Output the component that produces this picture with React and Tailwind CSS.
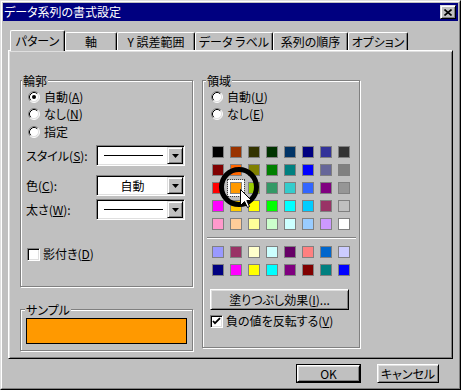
import React from "react";

const raised =
  "border border-t-white border-l-white border-r-black border-b-black shadow-[inset_1px_1px_0_#dfdfdf,inset_-1px_-1px_0_#808080]";
const raisedInner =
  "border border-t-[#dfdfdf] border-l-[#dfdfdf] border-r-black border-b-black shadow-[inset_1px_1px_0_#ffffff,inset_-1px_-1px_0_#808080]";
const sunken =
  "border border-t-[#808080] border-l-[#808080] border-r-white border-b-white shadow-[inset_1px_1px_0_#000000,inset_-1px_-1px_0_#dfdfdf]";
const etched = "border border-[#808080] shadow-[inset_1px_1px_0_#ffffff,1px_1px_0_#ffffff]";

const rows1 = [
  ["bg-[#000000]", "bg-[#993300]", "bg-[#333300]", "bg-[#003300]", "bg-[#003366]", "bg-[#000080]", "bg-[#333399]", "bg-[#333333]"],
  ["bg-[#800000]", "bg-[#ff6600]", "bg-[#808000]", "bg-[#008000]", "bg-[#008080]", "bg-[#0000ff]", "bg-[#666699]", "bg-[#808080]"],
  ["bg-[#ff0000]", "bg-[#ff9900]", "bg-[#99cc00]", "bg-[#339966]", "bg-[#33cccc]", "bg-[#3366ff]", "bg-[#800080]", "bg-[#969696]"],
  ["bg-[#ff00ff]", "bg-[#ffcc00]", "bg-[#ffff00]", "bg-[#00ff00]", "bg-[#00ffff]", "bg-[#00ccff]", "bg-[#993366]", "bg-[#c0c0c0]"],
  ["bg-[#ff99cc]", "bg-[#ffcc99]", "bg-[#ffff99]", "bg-[#ccffcc]", "bg-[#ccffff]", "bg-[#99ccff]", "bg-[#cc99ff]", "bg-[#ffffff]"],
];
const rows2 = [
  ["bg-[#9999ff]", "bg-[#993366]", "bg-[#ffffcc]", "bg-[#ccffff]", "bg-[#660066]", "bg-[#ff8080]", "bg-[#0066cc]", "bg-[#ccccff]"],
  ["bg-[#000080]", "bg-[#ff00ff]", "bg-[#ffff00]", "bg-[#00ffff]", "bg-[#800080]", "bg-[#800000]", "bg-[#008080]", "bg-[#0000ff]"],
];

function Radio({ checked }) {
  return (
    <svg width="12" height="12" viewBox="0 0 12 12" className="shrink-0">
      <circle cx="6" cy="6" r="5" fill="#ffffff" />
      <path d="M2.11 9.89 A5.5 5.5 0 0 1 9.89 2.11" fill="none" stroke="#808080" strokeWidth="1" />
      <path d="M9.89 2.11 A5.5 5.5 0 0 1 2.11 9.89" fill="none" stroke="#ffffff" strokeWidth="1" />
      <path d="M2.82 9.18 A4.5 4.5 0 0 1 9.18 2.82" fill="none" stroke="#000000" strokeWidth="1" />
      <path d="M9.18 2.82 A4.5 4.5 0 0 1 2.82 9.18" fill="none" stroke="#dfdfdf" strokeWidth="1" />
      {checked && <circle cx="6" cy="6" r="2" fill="#000000" />}
    </svg>
  );
}

function Check({ checked }) {
  return (
    <div className={`w-[13px] h-[13px] bg-white shrink-0 flex items-center justify-center ${sunken}`}>
      {checked && (
        <svg width="9" height="9" viewBox="0 0 9 9">
          <path d="M1 4 L3 6.2 L8 1.2" fill="none" stroke="#000000" strokeWidth="1.8" />
        </svg>
      )}
    </div>
  );
}

function Arrow() {
  return (
    <svg width="7" height="4" viewBox="0 0 7 4">
      <polygon points="0,0 7,0 3.5,4" fill="#000000" />
    </svg>
  );
}

function Combo({ children }) {
  return (
    <div className={`w-[89px] h-[21px] bg-white p-[1px] flex ${sunken}`}>
      <div className="flex-1 flex items-center">{children}</div>
      <div className={`w-[16px] h-[17px] bg-[#c0c0c0] flex items-center justify-center ${raisedInner}`}>
        <Arrow />
      </div>
    </div>
  );
}

function Label({ children, className = "" }) {
  return (
    <span className={`absolute -top-[7px] px-[1px] bg-[#c0c0c0] leading-[14px] ${className}`}>{children}</span>
  );
}

function U({ children }) {
  return <span className="underline underline-offset-[1px]">{children}</span>;
}

function Swatch({ color, selected }) {
  return (
    <div
      className={`w-[12px] h-[12px] border border-[#808080] ${color} ${
        selected ? "shadow-[0_0_0_2px_#ffffff] outline-1 outline-dotted outline-[#404040] outline-offset-2" : ""
      }`}
    />
  );
}

export default function App() {
  const tabs = [
    ["パターン", "w-[55px]"],
    ["軸", "w-[52px]"],
    ["Y 誤差範囲", "w-[78px]"],
    ["データ ラベル", "w-[78px]"],
    ["系列の順序", "w-[75px]"],
    ["オプション", "w-[60px]"],
  ];
  return (
    <div className="w-[461px] h-[390px] bg-[#c0c0c0] border border-t-[#dfdfdf] border-l-[#dfdfdf] border-r-black border-b-black text-[12px] leading-[14px] text-black font-['Noto_Sans_CJK_JP',sans-serif] [font-feature-settings:'palt']">
      <div className="h-full border border-t-white border-l-white border-r-[#808080] border-b-[#808080] p-[1px] flex flex-col">
        {/* Title bar */}
        <div className="h-[18px] bg-[#000080] text-white flex items-center justify-between pl-[1px] pr-[2px]">
          <span>データ系列の書式設定</span>
          <div className={`w-[16px] h-[14px] bg-[#c0c0c0] flex items-center justify-center ${raisedInner}`}>
            <svg width="8" height="7" viewBox="0 0 8 7">
              <path d="M0.5 0.5 L7.5 6.5 M7.5 0.5 L0.5 6.5" stroke="#000000" strokeWidth="1.6" />
            </svg>
          </div>
        </div>

        {/* Tabs */}
        <div className="mt-[9px] ml-[7px] h-[20px] flex items-end">
          {tabs.map(([t, w], i) => (
            <div
              key={t}
              className={`${w} ${
                i === 0 ? "h-[21px] -mb-[1px] relative z-10" : "h-[18px]"
              } bg-[#c0c0c0] border border-b-0 border-t-white border-l-white border-r-black rounded-t-[2px] shadow-[inset_-1px_0_0_#808080] flex items-center justify-center whitespace-nowrap`}
            >
              {t}
            </div>
          ))}
        </div>

        {/* Panel */}
        <div className="ml-[5px] w-[445px] h-[309px] border border-t-white border-l-white border-r-black border-b-black shadow-[inset_1px_1px_0_#dfdfdf,inset_-1px_-1px_0_#808080] flex items-start pl-[11px] pt-[29px]">
          {/* Left column */}
          <div className="w-[173px] flex flex-col">
            <div className={`relative h-[207px] pt-[7px] pl-[5px] ${etched}`}>
              <Label className="left-[1px]">輪郭</Label>
              <div className="flex items-center gap-[4px] h-[17px] ml-[2px]">
                <Radio checked />
                <span>
                  自動(<U>A</U>)
                </span>
              </div>
              <div className="flex items-center gap-[4px] h-[18px] ml-[2px]">
                <Radio />
                <span>
                  なし(<U>N</U>)
                </span>
              </div>
              <div className="flex items-center gap-[4px] h-[18px] ml-[2px]">
                <Radio />
                <span>指定</span>
              </div>
              <div className="flex items-center mt-[4px]">
                <span className="w-[70px]">
                  スタイル(<U>S</U>):
                </span>
                <Combo>
                  <div className="ml-[6px] w-[59px] h-px bg-black" />
                </Combo>
              </div>
              <div className="flex items-center mt-[9px]">
                <span className="w-[70px]">
                  色(<U>C</U>):
                </span>
                <Combo>
                  <span className="w-full text-center">自動</span>
                </Combo>
              </div>
              <div className="flex items-center mt-[3px]">
                <span className="w-[70px]">
                  太さ(<U>W</U>):
                </span>
                <Combo>
                  <div className="ml-[6px] w-[59px] h-px bg-black" />
                </Combo>
              </div>
              <div className="flex items-center gap-[3px] mt-[27px] ml-[1px]">
                <Check />
                <span>
                  影付き(<U>D</U>)
                </span>
              </div>
            </div>

            <div className={`relative mt-[22px] h-[42px] ${etched}`}>
              <Label className="left-[4px]">サンプル</Label>
              <div className="ml-[5px] mt-[8px] w-[161px] h-[26px] bg-[#ff9900] border border-black" />
            </div>
          </div>

          {/* Right group */}
          <div className={`relative ml-[9px] w-[158px] h-[268px] pt-[7px] pl-[4px] ${etched}`}>
            <Label className="left-[3px]">領域</Label>
            <div className="flex items-center gap-[4px] h-[17px] ml-[4px]">
              <Radio />
              <span>
                自動(<U>U</U>)
              </span>
            </div>
            <div className="flex items-center gap-[4px] h-[18px] ml-[4px]">
              <Radio />
              <span>
                なし(<U>E</U>)
              </span>
            </div>

            <div className="ml-[5px] mt-[23px] flex flex-col gap-[6px]">
              {rows1.map((r, ri) => (
                <div key={ri} className="flex gap-[6px]">
                  {r.map((c, ci) => (
                    <Swatch key={ci} color={c} selected={ri === 2 && ci === 1} />
                  ))}
                </div>
              ))}
            </div>
            <div className="mt-[7px] w-[149px] h-[2px] border-t border-t-[#808080] border-b border-b-white" />
            <div className="ml-[5px] mt-[7px] flex flex-col gap-[6px]">
              {rows2.map((r, ri) => (
                <div key={ri} className="flex gap-[6px]">
                  {r.map((c, ci) => (
                    <Swatch key={ci} color={c} />
                  ))}
                </div>
              ))}
            </div>

            <div className={`ml-[3px] mt-[13px] w-[139px] h-[21px] flex items-center justify-center ${raised}`}>
              <span>
                塗りつぶし効果(<U>I</U>)...
              </span>
            </div>
            <div className="ml-[3px] mt-[4px] flex items-center gap-[3px]">
              <Check checked />
              <span>
                負の値を反転する(<U>V</U>)
              </span>
            </div>

            {/* magnifier ring + cursor overlay */}
            <div className="absolute left-[16px] top-[86px] w-[40px] h-[40px] rounded-full border-[5px] border-black pointer-events-none" />
            <svg
              className="absolute left-[37px] top-[108px] pointer-events-none"
              width="13"
              height="20"
              viewBox="0 0 13 20"
            >
              <path
                d="M0.5 0.5 L0.5 16.5 L4.5 12.5 L7.5 18.5 L9.5 17.5 L6.8 11.5 L11.5 11.5 Z"
                fill="#ffffff"
                stroke="#000000"
                strokeWidth="1"
              />
            </svg>
          </div>
        </div>

        {/* Bottom buttons */}
        <div className="mt-[5px] flex justify-end items-start gap-[16px] pr-[19px]">
          <div className="w-[65px] h-[19px] border border-black">
            <div className={`w-full h-full flex items-center justify-center ${raised}`}>OK</div>
          </div>
          <div className={`w-[62px] h-[19px] flex items-center justify-center ${raised}`}>キャンセル</div>
        </div>
      </div>
    </div>
  );
}
